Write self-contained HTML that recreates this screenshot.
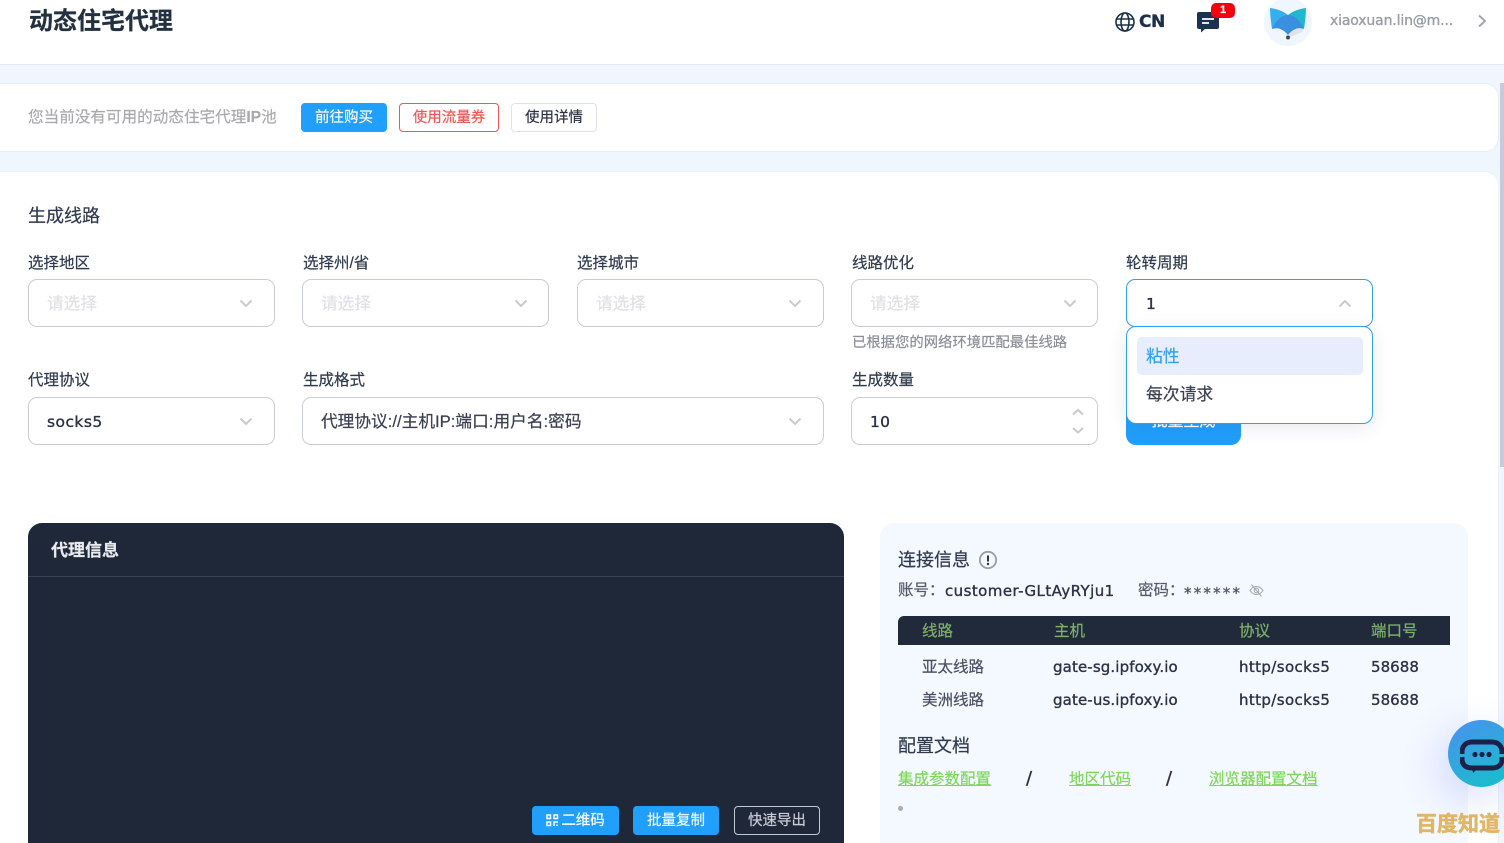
<!DOCTYPE html>
<html lang="zh">
<head>
<meta charset="utf-8">
<style>
html,body{margin:0;padding:0;width:1504px;height:843px;overflow:hidden;background:#f0f6fe;}
body{position:relative;font-family:"Liberation Sans","Noto Sans CJK SC",sans-serif;color:#2b3146;-webkit-text-stroke:.2px;}
.a{position:absolute;white-space:nowrap;}
.l{font-family:"DejaVu Sans","Noto Sans CJK SC",sans-serif;-webkit-text-stroke:.35px;}
.t{font-size:15.500px;line-height:20px;color:#2f3a4d;margin-top:1px;}
.sel{position:absolute;height:46px;border:1px solid #c9ccd6;border-radius:9px;background:#fff;box-sizing:content-box;}
.ph{position:absolute;left:18px;top:13px;font-size:16.700px;line-height:22px;color:#dfe1e6;}
.v{position:absolute;left:18px;top:13px;font-size:16px;line-height:22px;color:#2b3146;white-space:nowrap;}
.chev{position:absolute;top:19px;width:14px;height:9px;}
.btn{position:absolute;box-sizing:border-box;border-radius:4px;font-size:14.500px;text-align:center;white-space:nowrap;}
.num{font-size:15px;line-height:20px;color:#2b3146;}
</style>
</head>
<body>
<!-- header -->
<div class="a" style="left:0;top:0;width:1504px;height:65px;background:#fff;border-bottom:1px solid #e6e9ee;box-sizing:border-box;"></div>
<div class="a" style="left:29px;top:6px;font-size:24px;line-height:32px;font-weight:700;color:#22303f;">动态住宅代理</div>
<svg class="a" style="left:1114px;top:11px" width="22" height="22" viewBox="0 0 22 22" fill="none" stroke="#1d3049" stroke-width="1.6"><circle cx="11" cy="11" r="9"/><ellipse cx="11" cy="11" rx="4" ry="9"/><path d="M2.500 8h17M2.500 14h17"/></svg>
<div class="a l" style="left:1139px;top:12px;font-size:17px;line-height:20px;font-weight:700;color:#1d3049;letter-spacing:-.5px;">CN</div>
<svg class="a" style="left:1196px;top:11px" width="24" height="22" viewBox="0 0 24 22"><path d="M3 1h18a2 2 0 0 1 2 2v13a2 2 0 0 1-2 2H9l-4 3.500V18H3a2 2 0 0 1-2-2V3a2 2 0 0 1 2-2z" fill="#1b3350"/><path d="M6 8h12M6 12h7" stroke="#fff" stroke-width="1.800"/></svg>
<div class="a" style="left:1211px;top:3px;width:24px;height:15px;background:#f5000f;border-radius:5px;color:#fff;font-size:11px;font-weight:700;line-height:15px;text-align:center;">1</div>
<div class="a" style="left:1264px;top:-2px;width:48px;height:48px;border-radius:50%;background:#f0f6fe;"></div>
<svg class="a" style="left:1269px;top:7px" width="38" height="34" viewBox="0 0 38 34"><path d="M1 1C8 2 14 4 19 8L3 22C2 15 1 8 1 1z" fill="#36aef0"/><path d="M37 1C30 2 24 4 19 8L35 22C36 15 37 8 37 1z" fill="#1fb8cf"/><path d="M3 22C7 13 13 8 19 8C25 8 31 13 35 22C29 20 24 22 19 28C14 22 9 20 3 22z" fill="#3a8fe0"/><path d="M19 28C24 22 29 20 35 22L33 25L19 31z" fill="#dfe3ea"/><circle cx="19" cy="30.500" r="2" fill="#3d4a5c"/></svg>
<div class="a l" style="left:1330px;top:11px;font-size:14px;line-height:20px;color:#9a9ca6;letter-spacing:-.15px;">xiaoxuan.lin@m...</div>
<svg class="a" style="left:1477px;top:14px" width="10" height="14" viewBox="0 0 10 14" fill="none" stroke="#a3a6b0" stroke-width="2"><path d="M2 1.500L8 7L2 12.500"/></svg>

<!-- notice panel -->
<div class="a" style="left:0;top:83px;width:1499px;height:69px;background:#fff;border:1px solid #e9edf2;border-left:0;border-radius:0 14px 14px 0;box-sizing:border-box;"></div>
<div class="a" style="left:28px;top:108px;font-size:15.600px;line-height:20px;color:#a8aaae;">您当前没有可用的动态住宅代理<b>IP</b>池</div>
<div class="btn" style="left:301px;top:103px;width:86px;height:29px;background:#219ffc;color:#fff;line-height:31px;">前往购买</div>
<div class="btn" style="left:399px;top:103px;width:100px;height:29px;background:#fff;border:1px solid #f05656;color:#f25555;line-height:29px;">使用流量券</div>
<div class="btn" style="left:511px;top:103px;width:86px;height:29px;background:#fff;border:1px solid #dfe2ea;color:#2b3146;line-height:29px;">使用详情</div>

<!-- form panel -->
<div class="a" style="left:0;top:171px;width:1499px;height:672px;background:#fff;border:1px solid #eef1f5;border-left:0;border-bottom:0;border-radius:0 14px 0 0;box-sizing:border-box;"></div>
<div class="a" style="left:1500px;top:83px;width:4px;height:384px;background:#c8cadb;"></div>
<div class="a" style="left:28px;top:204px;font-size:18px;line-height:24px;color:#2f3a4d;">生成线路</div>

<div class="a t" style="left:28px;top:253px;">选择地区</div>
<div class="a t" style="left:303px;top:253px;">选择州/省</div>
<div class="a t" style="left:577px;top:253px;">选择城市</div>
<div class="a t" style="left:852px;top:253px;">线路优化</div>
<div class="a t" style="left:1126px;top:253px;">轮转周期</div>

<div class="sel" style="left:28px;top:279px;width:245px;"><span class="ph">请选择</span><svg class="chev" style="left:210px" viewBox="0 0 14 9" fill="none" stroke="#c9cacf" stroke-width="2"><path d="M1.500 1.500L7 7L12.500 1.500"/></svg></div>
<div class="sel" style="left:302px;top:279px;width:245px;"><span class="ph">请选择</span><svg class="chev" style="left:211px" viewBox="0 0 14 9" fill="none" stroke="#c9cacf" stroke-width="2"><path d="M1.500 1.500L7 7L12.500 1.500"/></svg></div>
<div class="sel" style="left:577px;top:279px;width:245px;"><span class="ph">请选择</span><svg class="chev" style="left:210px" viewBox="0 0 14 9" fill="none" stroke="#c9cacf" stroke-width="2"><path d="M1.500 1.500L7 7L12.500 1.500"/></svg></div>
<div class="sel" style="left:851px;top:279px;width:245px;"><span class="ph">请选择</span><svg class="chev" style="left:211px" viewBox="0 0 14 9" fill="none" stroke="#c9cacf" stroke-width="2"><path d="M1.500 1.500L7 7L12.500 1.500"/></svg></div>
<div class="a" style="left:852px;top:333px;font-size:14.350px;line-height:20px;color:#8b8e98;">已根据您的网络环境匹配最佳线路</div>

<div class="a t" style="left:28px;top:370px;">代理协议</div>
<div class="a t" style="left:303px;top:370px;">生成格式</div>
<div class="a t" style="left:852px;top:370px;">生成数量</div>

<div class="sel" style="left:28px;top:397px;width:245px;"><span class="v l" style="font-size:15.500px;letter-spacing:.45px;">socks5</span><svg class="chev" style="left:210px" viewBox="0 0 14 9" fill="none" stroke="#c9cacf" stroke-width="2"><path d="M1.500 1.500L7 7L12.500 1.500"/></svg></div>
<div class="sel" style="left:302px;top:397px;width:520px;"><span class="v" style="font-size:16.700px;color:#3a3f52;">代理协议://主机IP:端口:用户名:密码</span><svg class="chev" style="left:485px" viewBox="0 0 14 9" fill="none" stroke="#c9cacf" stroke-width="2"><path d="M1.500 1.500L7 7L12.500 1.500"/></svg></div>
<div class="sel" style="left:851px;top:397px;width:245px;"><span class="v l" style="font-size:15.500px;letter-spacing:.3px;">10</span>
<svg class="a" style="left:219px;top:10px" width="14" height="27" viewBox="0 0 14 27" fill="none" stroke="#c9cacf" stroke-width="2"><path d="M2 6.500L7 2L12 6.500M2 20L7 24.500L12 20"/></svg></div>

<!-- generate button behind dropdown -->
<div class="a" style="left:1126px;top:405px;width:115px;height:40px;background:#219ffc;border-radius:10px;color:#fff;font-size:16px;text-align:center;line-height:34px;overflow:hidden;">批量生成</div>

<!-- active select + dropdown -->
<div class="sel" style="left:1126px;top:279px;width:245px;border-color:#2ea0f5;"><span class="v l" style="left:19px;font-size:15.500px;">1</span><svg class="chev" style="left:211px" viewBox="0 0 14 9" fill="none" stroke="#c9cacf" stroke-width="2"><path d="M1.500 7.500L7 2L12.500 7.500"/></svg></div>
<div class="a" style="left:1126px;top:326px;width:247px;height:98px;box-sizing:border-box;background:#fff;border:1px solid #2ea0f5;border-radius:10px;box-shadow:0 4px 18px rgba(40,50,90,.10);">
  <div class="a" style="left:10px;top:10px;width:226px;height:38px;background:#e8edfd;border-radius:5px;"></div>
  <div class="a" style="left:19px;top:19px;font-size:16.800px;line-height:22px;color:#2ea0f5;">粘性</div>
  <div class="a" style="left:19px;top:57px;font-size:16.800px;line-height:22px;color:#3a3f52;">每次请求</div>
</div>

<!-- proxy info dark card -->
<div class="a" style="left:28px;top:523px;width:816px;height:320px;background:#1f2839;border-radius:14px 14px 0 0;"></div>
<div class="a" style="left:28px;top:576px;width:816px;height:1px;background:#394253;"></div>
<div class="a" style="left:51px;top:539px;font-size:17px;line-height:24px;font-weight:700;color:#e9ebef;">代理信息</div>
<div class="btn" style="left:532px;top:806px;width:87px;height:29px;background:#219ffc;color:#fff;line-height:31px;padding-left:15px;letter-spacing:-.1px;">二维码</div>
<svg class="a" style="left:546px;top:814px" width="13" height="13" viewBox="0 0 13 13" fill="none" stroke="#fff" stroke-width="1.500"><rect x="1" y="1" width="3.500" height="3.500"/><rect x="8" y="1" width="3.500" height="3.500"/><rect x="1" y="8" width="3.500" height="3.500"/><path d="M8 12V8h4M11 10.500V12"/></svg>
<div class="btn" style="left:633px;top:806px;width:86px;height:29px;background:#219ffc;color:#e9f5ff;line-height:31px;">批量复制</div>
<div class="btn" style="left:734px;top:806px;width:86px;height:29px;border:1px solid #c5c8d0;color:#c9ccd3;line-height:29px;">快速导出</div>

<!-- connect info card -->
<div class="a" style="left:880px;top:523px;width:588px;height:320px;background:#f4f8ff;border-radius:14px 14px 0 0;"></div>
<div class="a" style="left:898px;top:548px;font-size:18px;line-height:24px;color:#2f3a4d;">连接信息</div>
<svg class="a" style="left:978px;top:550px" width="20" height="20" viewBox="0 0 20 20" fill="none"><circle cx="10" cy="10" r="8.200" stroke="#9b9eaa" stroke-width="1.800"/><path d="M10 5.500v6" stroke="#2b3146" stroke-width="2"/><circle cx="10" cy="14" r="1.200" fill="#2b3146"/></svg>
<div class="a" style="left:898px;top:581px;font-size:15.500px;line-height:20px;color:#565b69;">账号：</div>
<div class="a l" style="left:945px;top:581px;font-size:15px;line-height:20px;color:#2b3146;letter-spacing:.43px;">customer-GLtAyRYju1</div>
<div class="a" style="left:1138px;top:581px;font-size:15.500px;line-height:20px;color:#565b69;">密码：</div>
<div class="a l" style="left:1184px;top:583px;font-size:15px;line-height:20px;color:#565b69;letter-spacing:2.200px;">******</div>
<svg class="a" style="left:1249px;top:583px" width="15" height="15" viewBox="0 0 15 15" fill="none" stroke="#a4a8b4" stroke-width="1.100"><path d="M1 7.500C3 4.500 5 3.500 7.500 3.500S12 4.500 14 7.500C12 10.500 10 11.500 7.500 11.500S3 10.500 1 7.500z"/><circle cx="7.500" cy="7.500" r="2.300"/><path d="M2.500 1.500L12.500 13.500"/></svg>

<div class="a" style="left:898px;top:616px;width:552px;height:29px;background:#212a3b;border-radius:6px 0 0 0;"></div>
<div class="a" style="left:922px;top:622px;font-size:15.500px;line-height:20px;color:#7fb069;">线路</div>
<div class="a" style="left:1054px;top:622px;font-size:15.500px;line-height:20px;color:#7fb069;">主机</div>
<div class="a" style="left:1239px;top:622px;font-size:15.500px;line-height:20px;color:#7fb069;">协议</div>
<div class="a" style="left:1371px;top:622px;font-size:15.500px;line-height:20px;color:#7fb069;">端口号</div>

<div class="a" style="left:922px;top:658px;font-size:15.500px;line-height:20px;color:#4a4f60;">亚太线路</div>
<div class="a l num" style="left:1053px;top:657px;letter-spacing:.12px;">gate-sg.ipfoxy.io</div>
<div class="a l num" style="left:1239px;top:657px;letter-spacing:.38px;">http/socks5</div>
<div class="a l num" style="left:1371px;top:657px;letter-spacing:.05px;">58688</div>
<div class="a" style="left:922px;top:691px;font-size:15.500px;line-height:20px;color:#4a4f60;">美洲线路</div>
<div class="a l num" style="left:1053px;top:690px;letter-spacing:.12px;">gate-us.ipfoxy.io</div>
<div class="a l num" style="left:1239px;top:690px;letter-spacing:.38px;">http/socks5</div>
<div class="a l num" style="left:1371px;top:690px;letter-spacing:.05px;">58688</div>

<div class="a" style="left:898px;top:734px;font-size:18px;line-height:24px;color:#2f3a4d;">配置文档</div>
<div class="a" style="left:898px;top:770px;font-size:15.500px;line-height:20px;color:#7fd65a;text-decoration:underline;">集成参数配置</div>
<div class="a l" style="left:1026px;top:769px;font-size:18px;line-height:20px;color:#2b3146;">/</div>
<div class="a" style="left:1069px;top:770px;font-size:15.500px;line-height:20px;color:#7fd65a;text-decoration:underline;">地区代码</div>
<div class="a l" style="left:1166px;top:769px;font-size:18px;line-height:20px;color:#2b3146;">/</div>
<div class="a" style="left:1209px;top:770px;font-size:15.500px;line-height:20px;color:#7fd65a;text-decoration:underline;">浏览器配置文档</div>
<div class="a" style="left:898px;top:806px;width:5px;height:5px;border-radius:50%;background:#a9abb3;"></div>

<!-- chat bubble -->
<div class="a" style="left:1448px;top:720px;width:67px;height:67px;border-radius:50%;background:linear-gradient(150deg,#4a90f0,#14c2c8);box-shadow:-8px 12px 40px rgba(80,110,250,.22);"></div>
<svg class="a" style="left:1460px;top:739px" width="44" height="36" viewBox="0 0 44 36" fill="none"><path d="M2 15V13C2 7 6 3 12 3H32C38 3 42 7 42 13V15M2 18V20C2 26 6 29 12 29H32C38 29 42 26 42 20V18" stroke="#1c2148" stroke-width="5"/><path d="M12 28h7l-6 6z" fill="#1c2148"/><circle cx="15" cy="15.500" r="2.600" fill="#1c2148"/><circle cx="22" cy="15.500" r="2.600" fill="#1c2148"/><circle cx="29" cy="15.500" r="2.600" fill="#1c2148"/></svg>
<div class="a" style="left:1416px;top:812px;font-size:21px;line-height:26px;font-weight:700;color:#e0b666;-webkit-text-stroke:.6px #e0b666;">百度知道</div>
</body>
</html>
